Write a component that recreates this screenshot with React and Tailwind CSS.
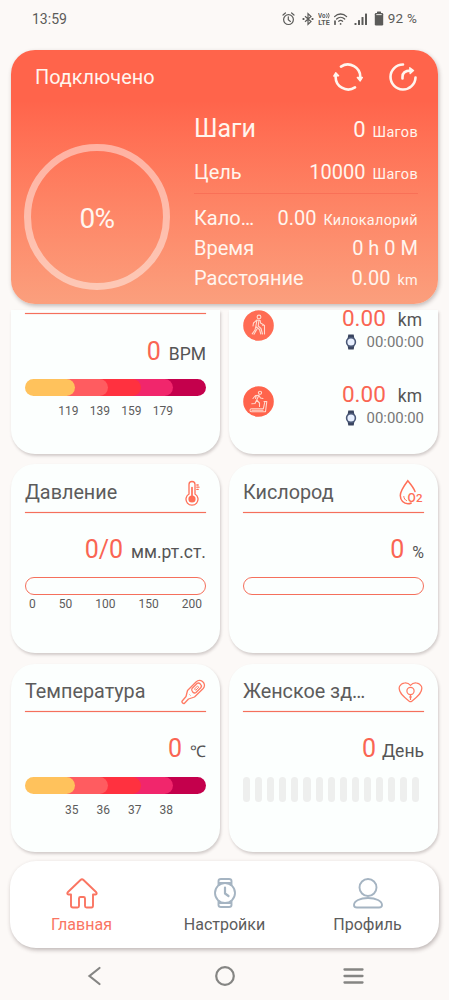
// Listed right to left: each zone's round end lies over the one after it.
const ZONES = [
    { start: 110, end: 181, color: '#c4004c' },
    { start: 80, end: 148, color: '#f1266c' },
    { start: 50, end: 116, color: '#ff313f' },
    { start: 20, end: 83, color: '#ff5c60' },
    { start: 0, end: 50, color: '#ffc25c' },
];

function StatusIcons() {
    return (
        <div className="flex items-center text-[#5b5b59]">
            <svg width="13" height="14" viewBox="0 0 13 14" fill="none" stroke="currentColor" strokeWidth="1.2" strokeLinecap="round">
                <circle cx="6.5" cy="7.6" r="4.9" />
                <path d="M6.3 4.8V7.8L8.4 9.4M1 3L3.4 1M12 3L9.6 1" />
            </svg>
            <svg width="12" height="14" viewBox="0 0 12 14" className="ml-[7px]" fill="none" stroke="currentColor" strokeWidth="1.2">
                <path d="M3 4.2L9 9.6L6 12.3V1.7L9 4.4L3 9.8" />
                <path d="M0.6 7H2.4M9.6 7H11.4" strokeWidth="1.8" />
            </svg>
            <svg width="12" height="14" viewBox="0 0 12 14" className="ml-[4px]" fill="currentColor" fontSize="7" fontWeight="700">
                <text x="0" y="6.3" textLength="7.5" lengthAdjust="spacingAndGlyphs">Vo</text>
                <path d="M8.5 1.5Q10 3.7 8.5 6M10.3 1Q12 3.7 10.3 6.3" fill="none" stroke="currentColor" strokeWidth="0.9" />
                <text x="0.2" y="13" textLength="11.5" lengthAdjust="spacingAndGlyphs">LTE</text>
            </svg>
            <svg width="15" height="14" viewBox="0 0 15 14" className="ml-[3px]" fill="none" stroke="currentColor" strokeWidth="1.3" strokeLinecap="round">
                <path d="M1.6 4.6C5 1.1 10.2 1.1 13.6 4.6M3.6 7C6 4.7 9.3 4.7 11.7 7M5.7 9.2C7 8.2 8.3 8.2 9.6 9.2" />
                <path d="M2 9V12.2M7.6 11.8V12" strokeWidth="1.7" />
            </svg>
            <svg width="14" height="14" viewBox="0 0 14 14" className="ml-[6px]" fill="currentColor">
                <rect x="0.5" y="11" width="2" height="2" rx="0.5" />
                <rect x="4" y="8" width="2" height="5" rx="0.5" />
                <rect x="7.5" y="5" width="2" height="8" rx="0.5" />
                <rect x="11" y="1.5" width="2" height="11.5" rx="0.5" />
            </svg>
            <svg width="10" height="15" viewBox="0 0 10 15" className="ml-[6px]" fill="currentColor">
                <rect x="3" y="0.5" width="4" height="2.5" rx="0.5" />
                <rect x="0.8" y="2" width="8.4" height="12.5" rx="1.2" />
                <rect x="2.3" y="3.2" width="5.4" height="0.9" fill="#fcfaf6" />
            </svg>
            <span className="ml-[4px] text-[13.5px] leading-none tracking-[0.2px]">92 %</span>
        </div>
    );
}

function RefreshIcon() {
    return (
        <svg width="30" height="30" viewBox="0 0 30 30" fill="none" stroke="#fff5ee" strokeWidth="2.6" strokeLinecap="round">
            <path d="M8 4.6A12.5 12.5 0 0 1 27.3 15.5" />
            <path d="M22 25.4A12.5 12.5 0 0 1 2.7 14" />
            <path d="M24.3 15.5L27.2 19L29.4 15.5Z M0.7 14L2.8 10.7L5.6 13.8Z" fill="#fff5ee" strokeWidth="1.3" strokeLinejoin="round" />
        </svg>
    );
}

function ShareIcon() {
    return (
        <svg width="30" height="30" viewBox="0 0 30 30" fill="none" stroke="#fff5ee" strokeWidth="2.6" strokeLinecap="round">
            <path d="M15 2.5A12.5 12.5 0 1 0 27.5 15.5" />
            <path d="M14.5 16.5V15C14.5 11 17.5 8.6 22.5 8.6" />
            <path d="M21.8 5.8L25.5 8.6L22.2 11.6Z" fill="#fff5ee" strokeWidth="1.4" strokeLinejoin="round" />
        </svg>
    );
}

function PressureIcon() {
    return (
        <svg width="16" height="26" viewBox="0 0 16 26" className="mr-[5px]" fill="none" stroke="#ff6f57" strokeWidth="1.3" strokeLinecap="round">
            <path d="M4 14V4.5A3 3 0 0 1 10 4.5V14A6 6 0 1 1 4 14Z" />
            <circle cx="7" cy="19" r="3.6" fill="#ff6f57" stroke="none" />
            <path d="M7 7.5V17" strokeWidth="1.7" />
            <path d="M11.8 5H13.2M11.8 7.2H14M11.8 9.4H13.2" />
        </svg>
    );
}

function OxygenIcon() {
    return (
        <svg width="24" height="27" viewBox="0 0 24 27" className="mr-[1px]" fill="none" stroke="#ff6f57" strokeWidth="1.5" strokeLinecap="round">
            <path d="M16 12.5C14.5 8.5 11.5 5 8.8 1.8C5.5 6.2 1.3 12 1.3 16.6C1.3 21.5 4.8 24.8 9 24.8C10.3 24.8 11.3 24.5 12.2 24" />
            <path d="M4.8 17.5C5 19.5 6 21 7.5 21.6" strokeWidth="1" />
            <text x="8.5" y="22.5" fontSize="12" fontWeight="500" fill="#ff6f57" stroke="none">O</text>
            <text x="17" y="22.5" fontSize="11.5" fontWeight="500" fill="#ff6f57" stroke="none">2</text>
        </svg>
    );
}

function TemperatureIcon() {
    return (
        <svg width="26" height="26" viewBox="0 0 26 26" fill="none" stroke="#ff7a63" strokeWidth="1.3" strokeLinejoin="round">
            <path d="M6 17.5L7.5 11.5L16 3C18 1 20.5 1 22.5 2.5C25 4.5 25 7.5 23.2 9.5L14.5 18L8.5 20L4.5 24.2C3.5 25.2 1.2 23.3 2.2 22Z" />
            <path d="M12 9.5L17 4.5C19 3 22.5 5.8 21 8.5L16 13.5C14 15 10.5 12 12 9.5Z" />
            <path d="M14.5 10L17.5 7L18.8 8.2L15.7 11.3Z M9.5 15.5L10.5 16.5" strokeWidth="1" />
        </svg>
    );
}

function WomenIcon() {
    return (
        <svg width="25" height="21" viewBox="0 0 25 21" className="mr-[1px]" fill="none" stroke="#ff7a63" strokeWidth="1.2" strokeLinejoin="round">
            <path d="M12.5 3.3C9.5 -0.2 3.7 0.3 1.6 4.3C-0.5 9.5 4.8 14.3 11.2 19.2Q12.5 20.2 13.8 19.2C20.2 14.3 25.5 9.5 23.4 4.3C21.3 0.3 15.5 -0.2 12.5 3.3Z" />
            <circle cx="12.5" cy="9" r="3.6" />
            <path d="M12.5 12.6V18M11 15H14" />
        </svg>
    );
}

function SportIcon({ treadmill }) {
    return (
        <svg width="31" height="31" viewBox="0 0 31 31" fill="none" stroke="#ffd9cd" strokeWidth="1.1" strokeLinecap="round" strokeLinejoin="round">
            <circle cx="15.5" cy="15.5" r="15.3" fill={treadmill ? '#ff644c' : '#ff6c54'} stroke="none" />
            {treadmill ? (
                <>
                    <circle cx="17" cy="6.8" r="1.6" />
                    <path d="M10 12.5L12.5 9.5L15.8 9.3L17.5 12L20 12.5M15.8 9.5L13.7 14L16.5 17V20.5M13.7 14L12 17.5L8.8 17.8M12.5 12.5L13.2 9.8" />
                    <path d="M21 15.5H23.8L22.5 25.8H8.5C6.5 25.8 6.5 22.8 8.5 22.8H20.3L21.8 16M9 24.3H20" />
                </>
            ) : (
                <>
                    <circle cx="16" cy="7" r="1.9" />
                    <path d="M14 10L17.2 10.5L17.5 13L20.5 14.8M14 10L10.5 13L10 16M14 10L12.8 16.5L16.5 19.5L17.8 24M15.8 11L15.2 16L18 18.5L19.5 24M12.8 16.5L12 20L9.2 23.8M14 19L11 24.2M19.5 15.3H21.5V24" />
                </>
            )}
        </svg>
    );
}

function MiniWatch() {
    return (
        <svg width="12" height="16" viewBox="0 0 12 16">
            <path d="M3.3 0.5H8.7L9.3 4H2.7Z M2.7 12H9.3L8.7 15.5H3.3Z" fill="#39445f" />
            <circle cx="6" cy="8" r="4.4" fill="#e8f0ff" stroke="#4a5877" strokeWidth="1.6" />
        </svg>
    );
}

function ZoneBar() {
    return (
        <svg width="181" height="17" viewBox="0 0 181 17" className="block">
            {ZONES.map((zone) => (
                <rect key={zone.end} x={zone.start} width={zone.end - zone.start} height="17" rx="8.5" fill={zone.color} />
            ))}
        </svg>
    );
}

function ZoneLabels({ values }) {
    return (
        <div className="ml-[22px] flex text-[12px] leading-[16px]">
            {values.map((value) => (
                <span key={value} className="w-[31.5px] text-right">{value}</span>
            ))}
        </div>
    );
}

function Card({ title, icon, height, headHeight, children }) {
    return (
        <section className={`w-[209px] rounded-[24px] bg-[#fcfffe] px-[14px] shadow-[1px_2px_3px_rgba(60,40,40,0.22)] ${height}`}>
            <header className={`flex items-center justify-between pt-[9px] ${headHeight}`}>
                <h2 className="text-[19.8px] leading-[24px] whitespace-nowrap">{title}</h2>
                {icon}
            </header>
            <div className="h-px bg-[#f5705c] shadow-[0_0_1px_#f5705c]" />
            {children}
        </section>
    );
}

function Value({ value, unit, unitClass = 'ml-[8px] text-[17.5px]' }) {
    return (
        <p className="h-[30px] text-right text-[25px] leading-[30px] text-[#fa6553]">
            {value}
            <span className={`text-[#555] ${unitClass}`}>{unit}</span>
        </p>
    );
}

function SportRow({ treadmill }) {
    return (
        <div className="flex h-[76px] justify-between">
            <div className="pt-[4px]">
                <SportIcon treadmill={treadmill} />
            </div>
            <div className="flex flex-col items-end">
                <p className="pr-[2px] text-[22.5px] leading-[24px] text-[#fa6553]">
                    0.00<span className="ml-[12px] text-[17.5px] leading-none text-[#555]">km</span>
                </p>
                <div className="mt-[3px] flex items-center gap-[10px]">
                    <MiniWatch />
                    <span className="text-[14.9px] leading-[18px] text-[#777]">00:00:00</span>
                </div>
            </div>
        </div>
    );
}

function Stat({ label, value, unit, className }) {
    return (
        <div className={`flex items-baseline justify-between ${className}`}>
            <span>{label}</span>
            <span>
                {value}
                {unit && <span className="ml-[7px] text-[14.4px] leading-none tracking-[0.35px]">{unit}</span>}
            </span>
        </div>
    );
}

function Tab({ label, active, children }) {
    return (
        <button className={`flex w-[143px] flex-col items-center text-[16px] leading-[20px] ${active ? 'text-[#fa7562]' : 'text-[#5c5c5c]'}`}>
            <svg width="32" height="32" viewBox="0 0 32 32" fill="none" stroke={active ? '#fa7562' : '#a5b4c2'} strokeWidth="1.9" strokeLinecap="round" strokeLinejoin="round">
                {children}
            </svg>
            <span className="mt-[6px]">{label}</span>
        </button>
    );
}

export default function App() {
    return (
        <div className="flex h-[1000px] w-[449px] flex-col overflow-hidden bg-[#fcf9f7] font-['Roboto',sans-serif] text-[#5c5c5c]">
            <div className="flex h-[50px] shrink-0 items-start justify-between px-[32px] pt-[11px]">
                <span className="text-[14px] leading-[16px] text-[#5b5b59]">13:59</span>
                <StatusIcons />
            </div>

            <section className="mx-[11px] h-[254px] shrink-0 rounded-[24px] bg-linear-to-b from-[#ff644b] from-20% to-[#fb9f7d] text-[#fff5ee] shadow-[1px_2px_4px_rgba(60,40,40,0.3)]">
                <div className="flex h-[54px] items-center justify-between pr-[20px] pl-[24px]">
                    <h1 className="pt-[2px] text-[19.9px] leading-[24px]">Подключено</h1>
                    <div className="flex gap-[25px]">
                        <RefreshIcon />
                        <ShareIcon />
                    </div>
                </div>
                <div className="flex pr-[20px] pl-[13px]">
                    <div className="mt-[40px] flex h-[146px] w-[146px] items-center justify-center rounded-full border-[7px] border-white/45 pt-[3px] text-[28px] tracking-[-0.5px]">0%</div>
                    <div className="ml-[24px] w-[224px] text-[20px] leading-[30px]">
                        <div className="h-[90px] border-b border-[#f56550]/60 pt-[10px]">
                            <Stat label={<span className="text-[25px]">Шаги</span>} value="0" unit="Шагов" className="text-[22px]" />
                            <Stat label="Цель" value="10000" unit="Шагов" className="mt-[12px]" />
                        </div>
                        <div className="pt-[9px]">
                            <Stat label="Кало…" value="0.00" unit="Килокалорий" />
                            <Stat label="Время" value="0 h 0 M" />
                            <Stat label="Расстояние" value="0.00" unit="km" />
                        </div>
                    </div>
                </div>
            </section>

            <main className="mt-[6px] flex shrink-0 flex-col">
                <div className="flex justify-between px-[11px]">
                    <section className="h-[144px] w-[209px] rounded-b-[24px] bg-[#fcfffe] px-[14px] pt-[3px] shadow-[1px_2px_3px_rgba(60,40,40,0.22)]">
                        <div className="h-px bg-[#f5705c] shadow-[0_0_1px_#f5705c]" />
                        <div className="pt-[23px]">
                            <Value value="0" unit="BPM" />
                        </div>
                        <div className="pt-[12px]">
                            <ZoneBar />
                        </div>
                        <div className="pt-[7px]">
                            <ZoneLabels values={[119, 139, 159, 179]} />
                        </div>
                    </section>
                    <section className="h-[144px] w-[209px] overflow-hidden rounded-b-[24px] bg-[#fcfffe] px-[14px] shadow-[1px_2px_3px_rgba(60,40,40,0.22)]">
                        <div className="-mt-[4px]">
                            <SportRow />
                            <SportRow treadmill />
                        </div>
                    </section>
                </div>

                <div className="mt-[10px] flex justify-between px-[11px]">
                    <Card title="Давление" icon={<PressureIcon />} height="h-[189px]" headHeight="h-[48px]">
                        <div className="pt-[22px]">
                            <Value value="0/0" unit="мм.рт.ст." />
                        </div>
                        <div className="mt-[12px] h-[18px] rounded-full border-[1.2px] border-[#f5705c]" />
                        <div className="flex justify-between px-[4px] text-[12px] leading-[18px]">
                            <span>0</span>
                            <span>50</span>
                            <span>100</span>
                            <span>150</span>
                            <span>200</span>
                        </div>
                    </Card>
                    <Card title="Кислород" icon={<OxygenIcon />} height="h-[189px]" headHeight="h-[48px]">
                        <div className="pt-[22px]">
                            <Value value="0" unit="%" unitClass="ml-[8px] text-[16px]" />
                        </div>
                        <div className="mt-[12px] h-[18px] rounded-full border-[1.2px] border-[#f5705c]" />
                    </Card>
                </div>

                <div className="mt-[11px] flex justify-between px-[11px]">
                    <Card title="Температура" icon={<TemperatureIcon />} height="h-[188px]" headHeight="h-[47px]">
                        <div className="pt-[22px] pb-[13px]">
                            <Value value="0" unit="℃" unitClass="ml-[8px] text-[16px]" />
                        </div>
                        <ZoneBar />
                        <div className="pt-[8px]">
                            <ZoneLabels values={[35, 36, 37, 38]} />
                        </div>
                    </Card>
                    <Card title="Женское зд…" icon={<WomenIcon />} height="h-[188px]" headHeight="h-[47px]">
                        <div className="pt-[22px]">
                            <Value value="0" unit="День" unitClass="ml-[6px] text-[17.5px]" />
                        </div>
                        <div className="mt-[13px] flex gap-[5px]">
                            {Array.from({ length: 15 }, (_, day) => (
                                <span key={day} className="h-[25px] w-[7.1px] rounded-full bg-[#eeefee]" />
                            ))}
                        </div>
                    </Card>
                </div>
            </main>

            <nav className="mx-[10px] mt-[9px] flex h-[87px] shrink-0 rounded-[26px] bg-white pt-[16px] shadow-[1px_2px_4px_rgba(60,40,40,0.32)]">
                <Tab label="Главная" active>
                    <path d="M5 17.5H2.5C1 17.5 1 16 2 15L14.5 3C15.5 2 16.5 2 17.5 3L30 15C31 16 31 17.5 29.5 17.5H27V28.5C27 30 26.5 30.5 25.5 30.5H20.5C19.5 30.5 19 30 19 29V21.5C19 20.5 18.5 20 17.5 20H14.5C13.5 20 13 20.5 13 21.5V29C13 30 12.5 30.5 11.5 30.5H7C5.5 30.5 5 30 5 28.5Z" />
                </Tab>
                <Tab label="Настройки">
                    <circle cx="16" cy="16" r="10" />
                    <path d="M9.5 8V4C9.5 2.5 10.5 2 12 2H20C21.5 2 22.5 2.5 22.5 4V8M9.5 24V28C9.5 29.5 10.5 30 12 30H20C21.5 30 22.5 29.5 22.5 28V24M10.5 6H21.5M10.5 26H21.5" />
                    <path d="M16 10.5V16.5L19.5 19" strokeWidth="2.2" />
                </Tab>
                <Tab label="Профиль">
                    <circle cx="16" cy="10.5" r="8.5" />
                    <path d="M2 28C2 24 8 21 16 21C24 21 30 24 30 28C30 30 29 30.5 27 30.5H5C3 30.5 2 30 2 28Z" />
                </Tab>
            </nav>

            <div className="flex h-[52px] shrink-0 items-center justify-between pt-[4px] pr-[85px] pl-[87px] text-[#858583]">
                <svg width="16" height="20" viewBox="0 0 16 20" fill="none" stroke="currentColor" strokeWidth="2.2" strokeLinecap="round">
                    <path d="M12.5 2L2.5 10L12.5 18" />
                </svg>
                <svg width="22" height="22" viewBox="0 0 22 22" className="ml-[3px]" fill="none" stroke="currentColor" strokeWidth="2.2">
                    <circle cx="11" cy="11" r="8.8" />
                </svg>
                <svg width="21" height="18" viewBox="0 0 21 18" fill="none" stroke="currentColor" strokeWidth="2.3" strokeLinecap="round">
                    <path d="M1.5 2.5H19.5M1.5 9H19.5M1.5 15.5H19.5" />
                </svg>
            </div>
        </div>
    );
}
